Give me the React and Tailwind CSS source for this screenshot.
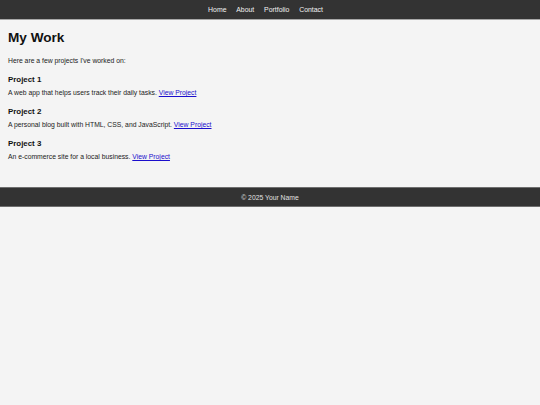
export default function App() {
  const font = { fontFamily: '"Liberation Sans", Arial, sans-serif' };
  const projects = [
    { t: "Project 1", d: "A web app that helps users track their daily tasks." },
    { t: "Project 2", d: "A personal blog built with HTML, CSS, and JavaScript." },
    { t: "Project 3", d: "An e-commerce site for a local business." },
  ];
  return (
    <div className="min-h-[405px] bg-[#f4f4f4] text-[#111]" style={font}>
      <header className="h-[20px] bg-[#333] border-b border-[#a8a8a8] flex items-center justify-center">
        <nav className="flex gap-[9.8px] pr-[9px] text-[6.9px] leading-[9px] text-[#f2f2f2]">
          <a href="#">Home</a>
          <a href="#">About</a>
          <a href="#">Portfolio</a>
          <a href="#">Contact</a>
        </nav>
      </header>
      <main className="px-[8px] pt-[10px] pb-[26px]">
        <h1 className="text-[13.6px] leading-[16px] font-bold">My Work</h1>
        <p className="mt-[10px] text-[6.8px] leading-[9px] text-[#222]">Here are a few projects I've worked on:</p>
        {projects.map((p) => (
          <div key={p.t}>
            <h3 className="mt-[10px] text-[7.9px] leading-[10px] font-bold">{p.t}</h3>
            <p className="mt-[3px] text-[6.8px] leading-[9px] text-[#222]">
              {p.d}{" "}
              <a href="#" className="text-[#1a0dcc] underline">View Project</a>
            </p>
          </div>
        ))}
      </main>
      <footer className="h-[20px] bg-[#333] border-y border-[#6e6e6e] flex items-center justify-center text-[6.8px] leading-[9px] text-[#e0e0e0]">
        © 2025 Your Name
      </footer>
    </div>
  );
}
